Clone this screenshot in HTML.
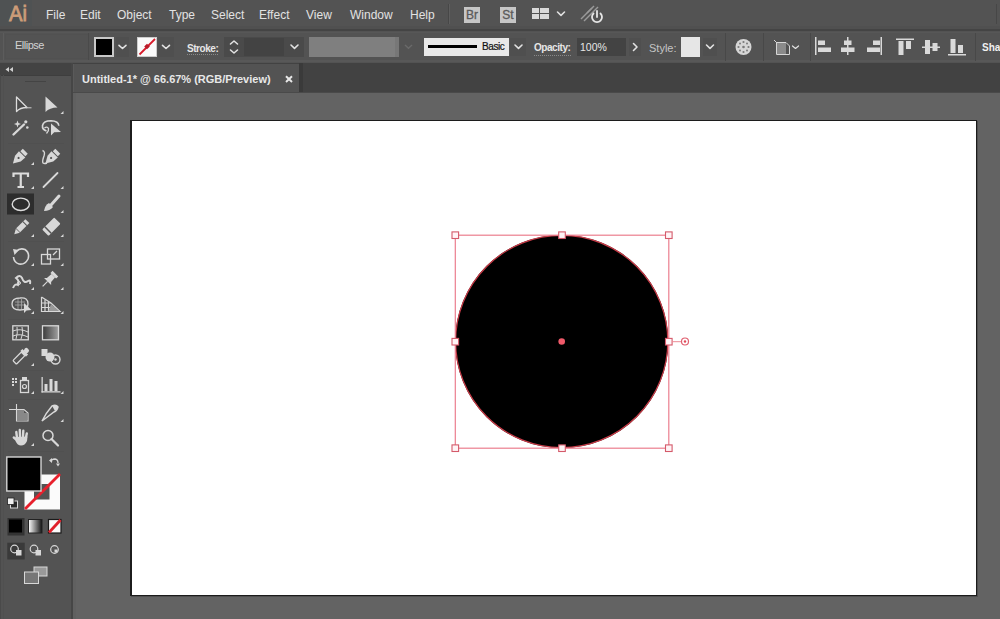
<!DOCTYPE html>
<html><head><meta charset="utf-8">
<style>
*{margin:0;padding:0;box-sizing:border-box}
html,body{width:1000px;height:619px;overflow:hidden;background:#535353;font-family:"Liberation Sans",sans-serif;color:#e6e6e6;position:relative}
.a{position:absolute;white-space:nowrap}
.menu{top:7px;font-size:12px;color:#e2e2e2;line-height:16px}
.lbl{font-size:10px;line-height:12px;color:#e6e6e6}
svg{position:absolute;left:0;top:0}
</style></head><body>
<!-- base panels -->
<div class="a" style="left:0;top:0;width:1000px;height:28px;background:#535353"></div>
<div class="a" style="left:0;top:26px;width:1000px;height:3px;background:#505050"></div><div class="a" style="left:0;top:29px;width:1000px;height:2px;background:#444"></div>
<div class="a" style="left:0;top:31px;width:1000px;height:32px;background:#535353"></div><div class="a" style="left:0;top:32px;width:1000px;height:1px;background:#575757"></div>
<div class="a" style="left:0;top:60px;width:1000px;height:2px;background:#585858"></div>
<div class="a" style="left:0;top:63px;width:71px;height:556px;background:#535353"></div>
<div class="a" style="left:0;top:63px;width:71px;height:12px;background:#434343"></div>
<div class="a" style="left:0;top:75px;width:71px;height:1px;background:#3e3e3e"></div><div class="a" style="left:0;top:75px;width:1px;height:544px;background:#4a4a4a"></div><div class="a" style="left:3px;top:75px;width:1px;height:544px;background:#505050"></div>

<div class="a" style="left:73px;top:63px;width:927px;height:30px;background:#424242"></div>
<div class="a" style="left:73px;top:64px;width:226px;height:28px;background:#535353"></div><div class="a" style="left:73px;top:64px;width:1px;height:28px;background:#5a5a5a"></div>
<div class="a" style="left:299px;top:63px;width:4px;height:30px;background:#3a3a3a"></div>
<div class="a" style="left:73px;top:92px;width:927px;height:1px;background:#4a4a4a"></div>
<div class="a" style="left:73px;top:93px;width:927px;height:526px;background:#636363"></div><div class="a" style="left:71px;top:63px;width:2px;height:556px;background:#464646"></div><div class="a" style="left:73px;top:93px;width:3px;height:526px;background:#606060"></div>
<div class="a" style="left:130px;top:120px;width:847px;height:476px;background:#fff;border:1px solid #1c1c1c;border-left:2px solid #1c1c1c;box-shadow:1px 1px 0 #4f4f4f"></div>

<!-- menu -->
<div class="a" style="left:0;top:0;width:32px;height:26px;background:#4f5253"></div>
<div class="a" style="left:9px;top:2px;font-size:22px;line-height:24px;color:#cc9c78;-webkit-text-stroke:0.8px #cc9c78;transform:scaleX(0.92);transform-origin:0 0">Ai</div>
<div class="a menu" style="left:46px">File</div>
<div class="a menu" style="left:80px">Edit</div>
<div class="a menu" style="left:117px">Object</div>
<div class="a menu" style="left:169px">Type</div>
<div class="a menu" style="left:211px">Select</div>
<div class="a menu" style="left:259px">Effect</div>
<div class="a menu" style="left:306px">View</div>
<div class="a menu" style="left:350px">Window</div>
<div class="a menu" style="left:410px">Help</div>
<div class="a" style="left:448px;top:4px;width:1px;height:20px;background:#474747"></div>
<div class="a" style="left:449px;top:4px;width:1px;height:20px;background:#5e5e5e"></div>
<div class="a" style="left:464px;top:7px;width:16px;height:16px;background:#c6c6c6;color:#5a5a5a;font-size:12px;line-height:16px;text-align:center;-webkit-text-stroke:0.3px #5a5a5a">Br</div>
<div class="a" style="left:500px;top:7px;width:16px;height:16px;background:#c6c6c6;color:#5a5a5a;font-size:12px;line-height:16px;text-align:center;-webkit-text-stroke:0.3px #5a5a5a">St</div>

<!-- control bar -->
<div class="a" style="left:5px;top:34px;width:84px;height:25px;border:1px solid #515151"></div><div class="a" style="left:3px;top:33px;width:1px;height:27px;background:#5c5c5c"></div><div class="a" style="left:88px;top:33px;width:1px;height:27px;background:#4a4a4a"></div>
<div class="a lbl" style="left:15px;top:39px;font-size:11px;letter-spacing:-0.5px;color:#d2d2d2">Ellipse</div>
<div class="a" style="left:94px;top:37px;width:20px;height:20px;background:#000;border:2px solid #c8c8c8"></div>
<div class="a" style="left:116px;top:37px;width:13px;height:20px;background:#4f4f4f"></div>
<div class="a" style="left:137px;top:37px;width:20px;height:20px;background:#fafafa;border:1px solid #ccc"></div>
<div class="a" style="left:158px;top:37px;width:16px;height:20px;background:#4f4f4f"></div>
<div class="a lbl" style="left:187px;top:43px;font-weight:bold;letter-spacing:-0.45px">Stroke:</div>
<div class="a" style="left:224px;top:37px;width:80px;height:20px;background:#4a4a4a"></div>
<div class="a" style="left:244px;top:38px;width:40px;height:18px;background:#434343"></div>
<div class="a" style="left:309px;top:37px;width:90px;height:20px;background:#7f7f7f;border-right:4px solid #777"></div>
<div class="a" style="left:424px;top:38px;width:85px;height:18px;background:#e8e8e8"></div>
<div class="a" style="left:428px;top:45px;width:49px;height:3px;background:#000"></div>
<div class="a" style="left:482px;top:41px;font-size:10px;line-height:12px;letter-spacing:-0.4px;color:#111;-webkit-text-stroke:0.2px #111">Basic</div>
<div class="a" style="left:510px;top:38px;width:16px;height:18px;background:#4f4f4f"></div>
<div class="a lbl" style="left:534px;top:42px;font-weight:bold;letter-spacing:-0.45px">Opacity:</div>
<div class="a" style="left:577px;top:38px;width:49px;height:18px;background:#434343"></div>
<div class="a lbl" style="left:580px;top:41px;font-size:10.5px">100%</div>
<div class="a" style="left:629px;top:38px;width:12px;height:18px;background:#4f4f4f"></div>
<div class="a lbl" style="left:649px;top:42px;font-size:11px;color:#c4c4c4">Style:</div>
<div class="a" style="left:681px;top:37px;width:19px;height:20px;background:#e6e6e6"></div>
<div class="a" style="left:703px;top:38px;width:14px;height:18px;background:#4f4f4f"></div>
<div class="a lbl" style="left:982px;top:42px;font-weight:bold;color:#f0f0f0">Sha</div>

<div class="a" style="left:187px;top:54px;width:31px;height:1px;border-top:1px dotted #8a8a8a"></div>
<div class="a" style="left:534px;top:55px;width:37px;height:1px;border-top:1px dotted #8a8a8a"></div>
<div class="a" style="left:996px;top:4px;width:1px;height:20px;background:#474747"></div>
<!-- tab -->
<div class="a" style="left:82px;top:72px;font-size:11px;line-height:14px;font-weight:bold;color:#e8e8e8">Untitled-1* @ 66.67% (RGB/Preview)</div>

<svg width="1000" height="619" viewBox="0 0 1000 619">
<g id="icons">
<g fill="none" stroke="#e2e2e2" stroke-width="1.6" stroke-linecap="round" stroke-linejoin="round">
<path d="M119 45.3 L122.5 48.5 L126 45.3"/>
<path d="M162.5 45.3 L166 48.5 L169.5 45.3"/>
<path d="M291 45 L294.5 48.3 L298 45"/>
<path d="M515 45 L518.5 48.3 L522 45"/>
<path d="M706.5 45 L710 48.3 L713.5 45"/>
<path d="M557.5 12 L561 15.3 L564.5 12"/>
<path d="M230.5 44 L234 41 L237.5 44"/>
<path d="M230.5 50 L234 53 L237.5 50"/>
<path d="M633.5 43.5 L637 47 L633.5 50.5"/>
<path d="M792.5 46 L795.5 48.5 L798.5 46" stroke-width="1.2"/>
</g>
<path d="M405 45 L408.5 48.3 L412 45" fill="none" stroke="#6a6a6a" stroke-width="1.4"/>
<!-- stroke swatch diagonal -->
<line x1="139.5" y1="54.5" x2="155" y2="39" stroke="#d81a2a" stroke-width="1.8"/>
<rect x="145" y="44.5" width="4" height="4" fill="#b81a28" transform="rotate(45 147 46.5)"/>
<!-- workspace icon -->
<g fill="#dadada">
<rect x="532" y="8" width="7" height="5"/><rect x="532" y="14" width="7" height="5"/>
<rect x="540" y="8" width="9" height="5"/><rect x="540" y="14" width="9" height="5"/>
</g>
<!-- gpu icon -->
<g stroke="#9a9a9a" stroke-width="1.5" fill="none">
<path d="M581 19 L594 6"/><path d="M584 21 L598 7"/><path d="M587 13 L592 8"/>
</g>
<g stroke="#e6e6e6" stroke-width="1.8" fill="none" stroke-linecap="round">
<path d="M593.5 13.5 A5 5 0 1 0 600.5 13.5"/><path d="M597 11 L597 17"/>
</g>
<!-- globe -->
<circle cx="743.5" cy="47" r="8" fill="#d6d6d6"/>
<g fill="#7a7a7a"><circle cx="743.5" cy="47" r="1.3"/><circle cx="743.5" cy="42" r="1.1"/><circle cx="743.5" cy="52" r="1.1"/><circle cx="738.5" cy="47" r="1.1"/><circle cx="748.5" cy="47" r="1.1"/><circle cx="740" cy="43.5" r="1"/><circle cx="747" cy="43.5" r="1"/><circle cx="740" cy="50.5" r="1"/><circle cx="747" cy="50.5" r="1"/></g>
<!-- separators -->
<g fill="#484848"><rect x="725" y="33" width="1" height="28"/><rect x="763" y="33" width="1" height="28"/><rect x="810" y="33" width="1" height="28"/><rect x="975" y="33" width="1" height="28"/></g>
<!-- artboard transform icon -->
<g stroke="#d6d6d6" stroke-width="1" fill="none"><path d="M776.5 42.5 L786 42.5 L789.5 46 L789.5 54.5 L776.5 54.5 Z"/></g>
<rect x="777" y="43" width="9" height="11" fill="#8a8a8a"/>
<path d="M774 40 L777 43" stroke="#d6d6d6" stroke-width="1"/>
<!-- align icons -->
<g fill="#d9d9d9">
<rect x="815" y="37" width="1.5" height="18"/><rect x="818" y="40.5" width="7" height="4.5"/><rect x="818" y="47.5" width="13" height="4.5"/>
<rect x="847" y="37" width="1.5" height="18"/><rect x="844" y="40.5" width="7.5" height="4.5"/><rect x="841" y="47.5" width="13.5" height="4.5"/>
<rect x="880.5" y="37" width="1.5" height="18"/><rect x="873" y="40.5" width="7" height="4.5"/><rect x="867" y="47.5" width="13" height="4.5"/>
<rect x="896" y="38.5" width="18" height="1.5"/><rect x="898.5" y="41" width="5" height="14"/><rect x="906" y="41" width="5" height="8"/>
<rect x="922" y="46.5" width="18" height="1.5"/><rect x="925" y="40" width="5" height="14"/><rect x="932.5" y="43" width="5" height="8"/>
<rect x="948" y="54" width="18" height="1.5"/><rect x="950.5" y="39" width="5" height="14"/><rect x="958" y="45" width="5" height="8"/>
</g>
<!-- tab close -->
<g stroke="#e8e8e8" stroke-width="1.9"><path d="M286 76.2 L292 82"/><path d="M292 76.2 L286 82"/></g>

<!-- TOOLBAR ICONS -->
<g fill="#d8d8d8">
<!-- flyout triangles -->
<path d="M63.5 111 L63.5 114 L60.5 114 Z"/>
<path d="M34 162 L34 165 L31 165 Z"/>
<path d="M34 186 L34 189 L31 189 Z"/><path d="M63.5 186 L63.5 189 L60.5 189 Z"/>
<path d="M34 210 L34 213 L31 213 Z"/><path d="M63.5 210 L63.5 213 L60.5 213 Z"/>
<path d="M34 234 L34 237 L31 237 Z"/><path d="M63.5 234 L63.5 237 L60.5 237 Z"/>
<path d="M34 263 L34 266 L31 266 Z"/><path d="M63.5 263 L63.5 266 L60.5 266 Z"/>
<path d="M34 287 L34 290 L31 290 Z"/><path d="M63.5 287 L63.5 290 L60.5 290 Z"/>
<path d="M34 311 L34 314 L31 314 Z"/><path d="M63.5 311 L63.5 314 L60.5 314 Z"/>
<path d="M34 363 L34 366 L31 366 Z"/>
<path d="M34 391 L34 394 L31 394 Z"/><path d="M63.5 391 L63.5 394 L60.5 394 Z"/>
<path d="M63.5 419 L63.5 422 L60.5 422 Z"/>
<path d="M34 443 L34 446 L31 446 Z"/>
</g>
<!-- selection tool (outline arrow) -->
<path d="M16.5 97 L16.5 111.5 Q20 107.5 27 107.5 Z" fill="#4a4a4a" stroke="#dcdcdc" stroke-width="1.3" stroke-linejoin="round"/>
<path d="M26 107.8 L31.5 107.8" stroke="#cfcfcf" stroke-width="1"/>
<!-- direct selection -->
<path d="M45.5 96.5 L45.5 112 Q49.5 107.5 57.5 107.5 Z" fill="#d8d8d8"/>
<!-- magic wand -->
<path d="M13.5 134.5 L24 124.5" stroke="#d8d8d8" stroke-width="2.4" stroke-linecap="round"/>
<path d="M17.5 120.5 L18.4 123 L21 124 L18.4 125 L17.5 127.5 L16.6 125 L14 124 L16.6 123 Z" fill="#d8d8d8"/>
<circle cx="25.8" cy="121.8" r="1.6" fill="#d8d8d8"/><circle cx="27.3" cy="127.5" r="1.3" fill="#d8d8d8"/>
<!-- lasso -->
<path d="M46.5 131 Q42 129.5 42.5 125.5 Q43.5 120.8 51 120.8 Q58.5 121 58.8 125.8" fill="none" stroke="#d8d8d8" stroke-width="1.6"/>
<path d="M44.5 128 Q47 126 48.5 128.5 Q49 131 46.5 133.5" fill="none" stroke="#d8d8d8" stroke-width="1.4"/>
<path d="M51 123.5 L51 135.5 L54.2 132.3 L61 132 Z" fill="#d8d8d8"/>
<!-- separator lines -->
<g fill="#505050"><rect x="8" y="143" width="56" height="1"/><rect x="8" y="241" width="56" height="1"/><rect x="8" y="319" width="56" height="1"/><rect x="8" y="370" width="56" height="1"/><rect x="8" y="399" width="56" height="1"/><rect x="8" y="451" width="56" height="1"/></g>
<!-- pen -->
<g transform="translate(20 156.5) rotate(45)">
<path d="M-4.5 -3 L4.5 -3 L4 3 L0 10 L-4 3 Z" fill="#d8d8d8"/>
<rect x="-3.5" y="-7.5" width="7" height="3.5" fill="#d8d8d8"/>
<circle cx="0" cy="2" r="1.1" fill="#535353"/>
</g>
<!-- curvature pen -->
<g transform="translate(52.5 156.5) rotate(45)">
<path d="M-4.5 -3 L4.5 -3 L4 3 L0 10 L-4 3 Z" fill="#d8d8d8"/>
<rect x="-3.5" y="-7.5" width="7" height="3.5" fill="#d8d8d8"/>
<circle cx="0" cy="2" r="1.1" fill="#535353"/>
</g>
<path d="M42.5 150.5 Q45.5 151.5 44 156 Q42 161 43 163 Q44.5 164 47 163" fill="none" stroke="#d8d8d8" stroke-width="1.4"/>
<!-- type T -->
<path d="M13.5 177 L13.5 173.5 L28 173.5 L28 177 M20.75 173.5 L20.75 187 M17.5 187 L24 187" fill="none" stroke="#dcdcdc" stroke-width="2.2"/>
<!-- line -->
<path d="M43.5 187 L57.5 173" stroke="#d8d8d8" stroke-width="1.8" stroke-linecap="round"/>
<!-- ellipse selected -->
<rect x="7" y="193.5" width="27" height="21" fill="#2d2d2d"/>
<ellipse cx="20.8" cy="204.3" rx="8.6" ry="6.2" fill="none" stroke="#dcdcdc" stroke-width="1.4"/>
<!-- paintbrush -->
<path d="M59 196 L51 205" stroke="#d8d8d8" stroke-width="3" stroke-linecap="round"/>
<path d="M49 203 Q45 205 44 211 Q50 211 53 207 Z" fill="#d8d8d8"/>
<!-- pencil -->
<g transform="translate(21 227.5) rotate(45)">
<rect x="-2.8" y="-9" width="5.6" height="13" fill="#d8d8d8"/>
<path d="M-2.8 4.5 L2.8 4.5 L0 9.5 Z" fill="#d8d8d8"/>
<rect x="-2.8" y="-6" width="5.6" height="1" fill="#535353"/>
</g>
<!-- eraser -->
<g transform="translate(51 227) rotate(45)">
<rect x="-4.5" y="-9" width="9" height="17" rx="1" fill="#d8d8d8"/>
<rect x="-4.5" y="3.5" width="9" height="1.5" fill="#535353"/>
</g>
<!-- rotate -->
<path d="M16 251.5 Q20 247.5 25 249.5 Q30 253 28 259 Q25 265 19 264 Q14 262.5 13.5 257" fill="none" stroke="#d8d8d8" stroke-width="1.6"/>
<path d="M13 249 L19 250 L14.5 255 Z" fill="#d8d8d8"/>
<!-- scale -->
<g fill="none" stroke="#d8d8d8" stroke-width="1.3">
<rect x="47.5" y="249" width="12" height="10"/><rect x="41.5" y="254.5" width="9" height="9.5"/>
<path d="M53 255 L57 251"/>
</g>
<!-- warp -->
<path d="M13 288 Q15 283 18 285 Q20 281 16 278 Q20 274 22 278 Q24 284 28 281 Q31 279 30 284" fill="none" stroke="#d8d8d8" stroke-width="2"/>
<circle cx="19" cy="283" r="1.5" fill="none" stroke="#d8d8d8" stroke-width="1"/>
<!-- puppet pin -->
<g transform="translate(49 280) rotate(45)">
<rect x="-4" y="-9" width="8" height="3" fill="#d8d8d8"/>
<path d="M-2.5 -6 L2.5 -6 L3 0 L5 2 L-5 2 L-3 0 Z" fill="#d8d8d8"/>
<rect x="-0.6" y="2" width="1.2" height="7" fill="#d8d8d8"/>
</g>
<!-- shape builder -->
<path d="M20 298 Q28 297 28 304 Q28 310 20 310 Q12 310 12 304 Q12 298 20 298 Z" fill="none" stroke="#d8d8d8" stroke-width="1.3"/>
<path d="M15 302 L25 302 M15 305 L25 305 M18 299 L18 309 M21.5 299 L21.5 309" stroke="#a8a8a8" stroke-width="0.8"/>
<path d="M24 303 L24 313 L26.5 310.5 L31.5 310 Z" fill="#d8d8d8"/>
<!-- perspective grid -->
<g fill="none" stroke="#d8d8d8" stroke-width="1.2">
<path d="M41.5 297 L41.5 311.5 L60 311.5 L51 303 L41.5 297"/>
<path d="M45 299.5 L45 311.5 M48.5 301.5 L48.5 311.5 M41.5 303 L51 303 M41.5 307.5 L55.5 307.5"/>
</g>
<path d="M48.5 311 L59 311 L51 304 Z" fill="#999"/>
<!-- mesh -->
<rect x="12.8" y="325.8" width="15.5" height="14" fill="none" stroke="#d8d8d8" stroke-width="1.3"/>
<path d="M16 339 Q18 333 17 327 M21 339 Q24 333 22 327 M13 331 Q20 328 28 332 M13 336 Q20 333 28 337" fill="none" stroke="#d8d8d8" stroke-width="1"/>
<!-- gradient -->
<defs><linearGradient id="gt" x1="0" x2="1" y1="0" y2="1"><stop offset="0" stop-color="#444"/><stop offset="1" stop-color="#9a9a9a"/></linearGradient>
<linearGradient id="gt2" x1="0" x2="1"><stop offset="0" stop-color="#3a3a3a"/><stop offset="1" stop-color="#a0a0a0"/></linearGradient><linearGradient id="gsw" x1="0" x2="1"><stop offset="0" stop-color="#fff"/><stop offset="1" stop-color="#111"/></linearGradient></defs>
<rect x="42.5" y="325.8" width="16" height="14" fill="url(#gt2)" stroke="#d8d8d8" stroke-width="1.3"/>
<!-- eyedropper -->
<g transform="translate(21 356) rotate(45)">
<rect x="-2.5" y="-3" width="5" height="12" rx="1" fill="none" stroke="#d8d8d8" stroke-width="1.3"/>
<rect x="-4" y="-6" width="8" height="3" fill="#d8d8d8"/>
<rect x="-2.5" y="-10" width="5" height="4.5" rx="2" fill="#d8d8d8"/>
</g>
<!-- blend -->
<rect x="41.5" y="349" width="6" height="7" fill="#d8d8d8"/>
<circle cx="50" cy="357" r="4.5" fill="#d8d8d8"/>
<circle cx="55.5" cy="359.5" r="4.5" fill="none" stroke="#d8d8d8" stroke-width="1.4"/>
<circle cx="55.5" cy="359.5" r="1.2" fill="#d8d8d8"/>
<!-- symbol sprayer -->
<g fill="#d8d8d8"><rect x="12" y="378" width="2" height="2"/><rect x="15" y="378" width="2" height="2"/><rect x="12" y="381" width="2" height="2"/><rect x="15" y="381" width="2" height="2"/><rect x="12" y="384" width="2" height="2"/>
<rect x="22" y="377" width="5" height="3"/></g>
<rect x="20.5" y="380.5" width="8" height="12" fill="none" stroke="#d8d8d8" stroke-width="1.3"/>
<circle cx="24.5" cy="386.5" r="2" fill="none" stroke="#d8d8d8" stroke-width="1.2"/>
<!-- graph -->
<g fill="#d8d8d8"><rect x="41.5" y="377" width="1.3" height="15.5"/><rect x="41.5" y="391.2" width="19" height="1.3"/>
<rect x="44.5" y="384" width="3" height="7"/><rect x="49.5" y="379" width="3" height="12"/><rect x="54.5" y="381" width="3" height="10"/></g>
<!-- artboard tool -->
<g fill="none" stroke="#d8d8d8" stroke-width="1.1">
<path d="M16.5 404 L16.5 421 L28 421 L28 413 L24 409.5 L9 409.5"/>
</g>
<rect x="17" y="410" width="7" height="10.5" fill="#888"/><rect x="17" y="413" width="10.5" height="7.5" fill="#888"/>
<!-- slice -->
<path d="M42 421 Q46 413 52 406 Q56 404 58 407 Q57 411 54 412 Z" fill="none" stroke="#d8d8d8" stroke-width="1.4"/>
<path d="M52.5 406.5 Q56 404 58 407 Q57 410 55 411 Z" fill="#d8d8d8"/>
<!-- hand -->
<g stroke="#d8d8d8" stroke-width="2.4" stroke-linecap="round" fill="none">
<path d="M17 438 L16.3 432"/><path d="M20 437 L19.8 430"/><path d="M23 437 L23.3 430.8"/><path d="M25.8 438 L26.8 433.5"/><path d="M18 441 L13.8 437.5"/>
</g>
<path d="M15.5 437 L27.5 436.5 L27 441 Q25 445.5 21 445.5 Q17.5 445.5 15.5 441 Z" fill="#d8d8d8"/>
<!-- zoom -->
<circle cx="48" cy="435.5" r="5" fill="none" stroke="#d8d8d8" stroke-width="1.5"/>
<path d="M51.5 439 L58 445.5" stroke="#d8d8d8" stroke-width="2.2" stroke-linecap="round"/>
<!-- fill / stroke -->
<rect x="24.5" y="474.5" width="35.5" height="35" fill="#fbfbfb"/>
<rect x="34" y="484" width="15.5" height="15.5" fill="#535353"/>
<line x1="25" y1="509" x2="60" y2="474" stroke="#e8202c" stroke-width="2.8"/>
<rect x="6.8" y="457" width="34.2" height="34" fill="#000" stroke="#d6d6d6" stroke-width="1.4"/>
<!-- swap -->
<path d="M51.5 462 Q51 459 55 459 Q58 459.5 58 463" fill="none" stroke="#d8d8d8" stroke-width="1.3"/>
<path d="M49 460.5 L52 458 L52 463 Z M56 463.5 L60 463.5 L58 466.5 Z" fill="#d8d8d8"/>
<!-- default mini -->
<rect x="10.5" y="501" width="7" height="7" fill="#2a2a2a" stroke="#d8d8d8" stroke-width="1"/>
<rect x="7.5" y="498" width="6.5" height="6.5" fill="#f0f0f0" stroke="#222" stroke-width="0.8"/>
<!-- color/gradient/none -->
<rect x="7.5" y="518" width="17" height="17.5" fill="#333"/>
<rect x="9" y="519.5" width="13" height="13" fill="#000"/>
<rect x="28.5" y="519.5" width="13.5" height="13.5" fill="url(#gsw)" stroke="#222" stroke-width="1"/>
<rect x="48.5" y="519.5" width="12.5" height="13.5" fill="#fafafa" stroke="#1a1a1a" stroke-width="1.2"/>
<line x1="49" y1="532.5" x2="60.5" y2="520" stroke="#e0202a" stroke-width="2.8"/>
<!-- draw modes -->
<rect x="7.3" y="542.7" width="17.4" height="16.8" fill="#3a3a3a"/>
<g fill="none" stroke="#d8d8d8" stroke-width="1.2">
<circle cx="14.5" cy="549" r="3.8"/><circle cx="34" cy="549" r="3.8"/><circle cx="54.5" cy="549.5" r="3.8"/>
</g>
<rect x="16" y="550" width="5.5" height="5.5" fill="#d8d8d8"/>
<rect x="35.5" y="550" width="5.5" height="5.5" fill="#d8d8d8"/>
<rect x="54.5" y="549.5" width="3" height="3" fill="#d8d8d8"/>
<!-- screen mode -->
<rect x="34" y="567" width="13" height="9" fill="#999" stroke="#d8d8d8" stroke-width="1"/>
<rect x="24.5" y="572" width="14" height="11.5" fill="#777" stroke="#d8d8d8" stroke-width="1"/>
<!-- panel collapse arrows -->
<g fill="#d0d0d0"><path d="M5.5 69.5 L9 67 L9 72 Z"/><path d="M9.5 69.5 L13 67 L13 72 Z"/></g>
<!-- grip -->
<rect x="25" y="81" width="21" height="1" fill="#444"/>
</g>
<!-- selection -->
<circle cx="561.7" cy="341.5" r="106.6" fill="#000"/>
<circle cx="561.7" cy="341.5" r="106.1" fill="none" stroke="#c83c48" stroke-width="1.2"/>
<rect x="455.3" y="235.2" width="213.5" height="213" fill="none" stroke="#ec7e8e" stroke-width="1.2"/>
<g fill="#fff4f6" stroke="#d45a6a" stroke-width="1.1">
<rect x="452.00" y="231.90" width="6.6" height="6.6"/>
<rect x="558.70" y="231.90" width="6.6" height="6.6"/>
<rect x="665.50" y="231.90" width="6.6" height="6.6"/>
<rect x="452.00" y="338.40" width="6.6" height="6.6"/>
<rect x="665.50" y="338.40" width="6.6" height="6.6"/>
<rect x="452.00" y="444.90" width="6.6" height="6.6"/>
<rect x="558.70" y="444.90" width="6.6" height="6.6"/>
<rect x="665.50" y="444.90" width="6.6" height="6.6"/>
</g>
<circle cx="561.7" cy="341.5" r="3.3" fill="#f05a6a"/>
<line x1="672" y1="341.7" x2="681.5" y2="341.7" stroke="#ec8a96" stroke-width="1"/>
<circle cx="685" cy="341.5" r="3.5" fill="#fff" stroke="#e06070" stroke-width="1.2"/>
<circle cx="685" cy="341.5" r="1.2" fill="#e04858"/>
</svg>
</body></html>
